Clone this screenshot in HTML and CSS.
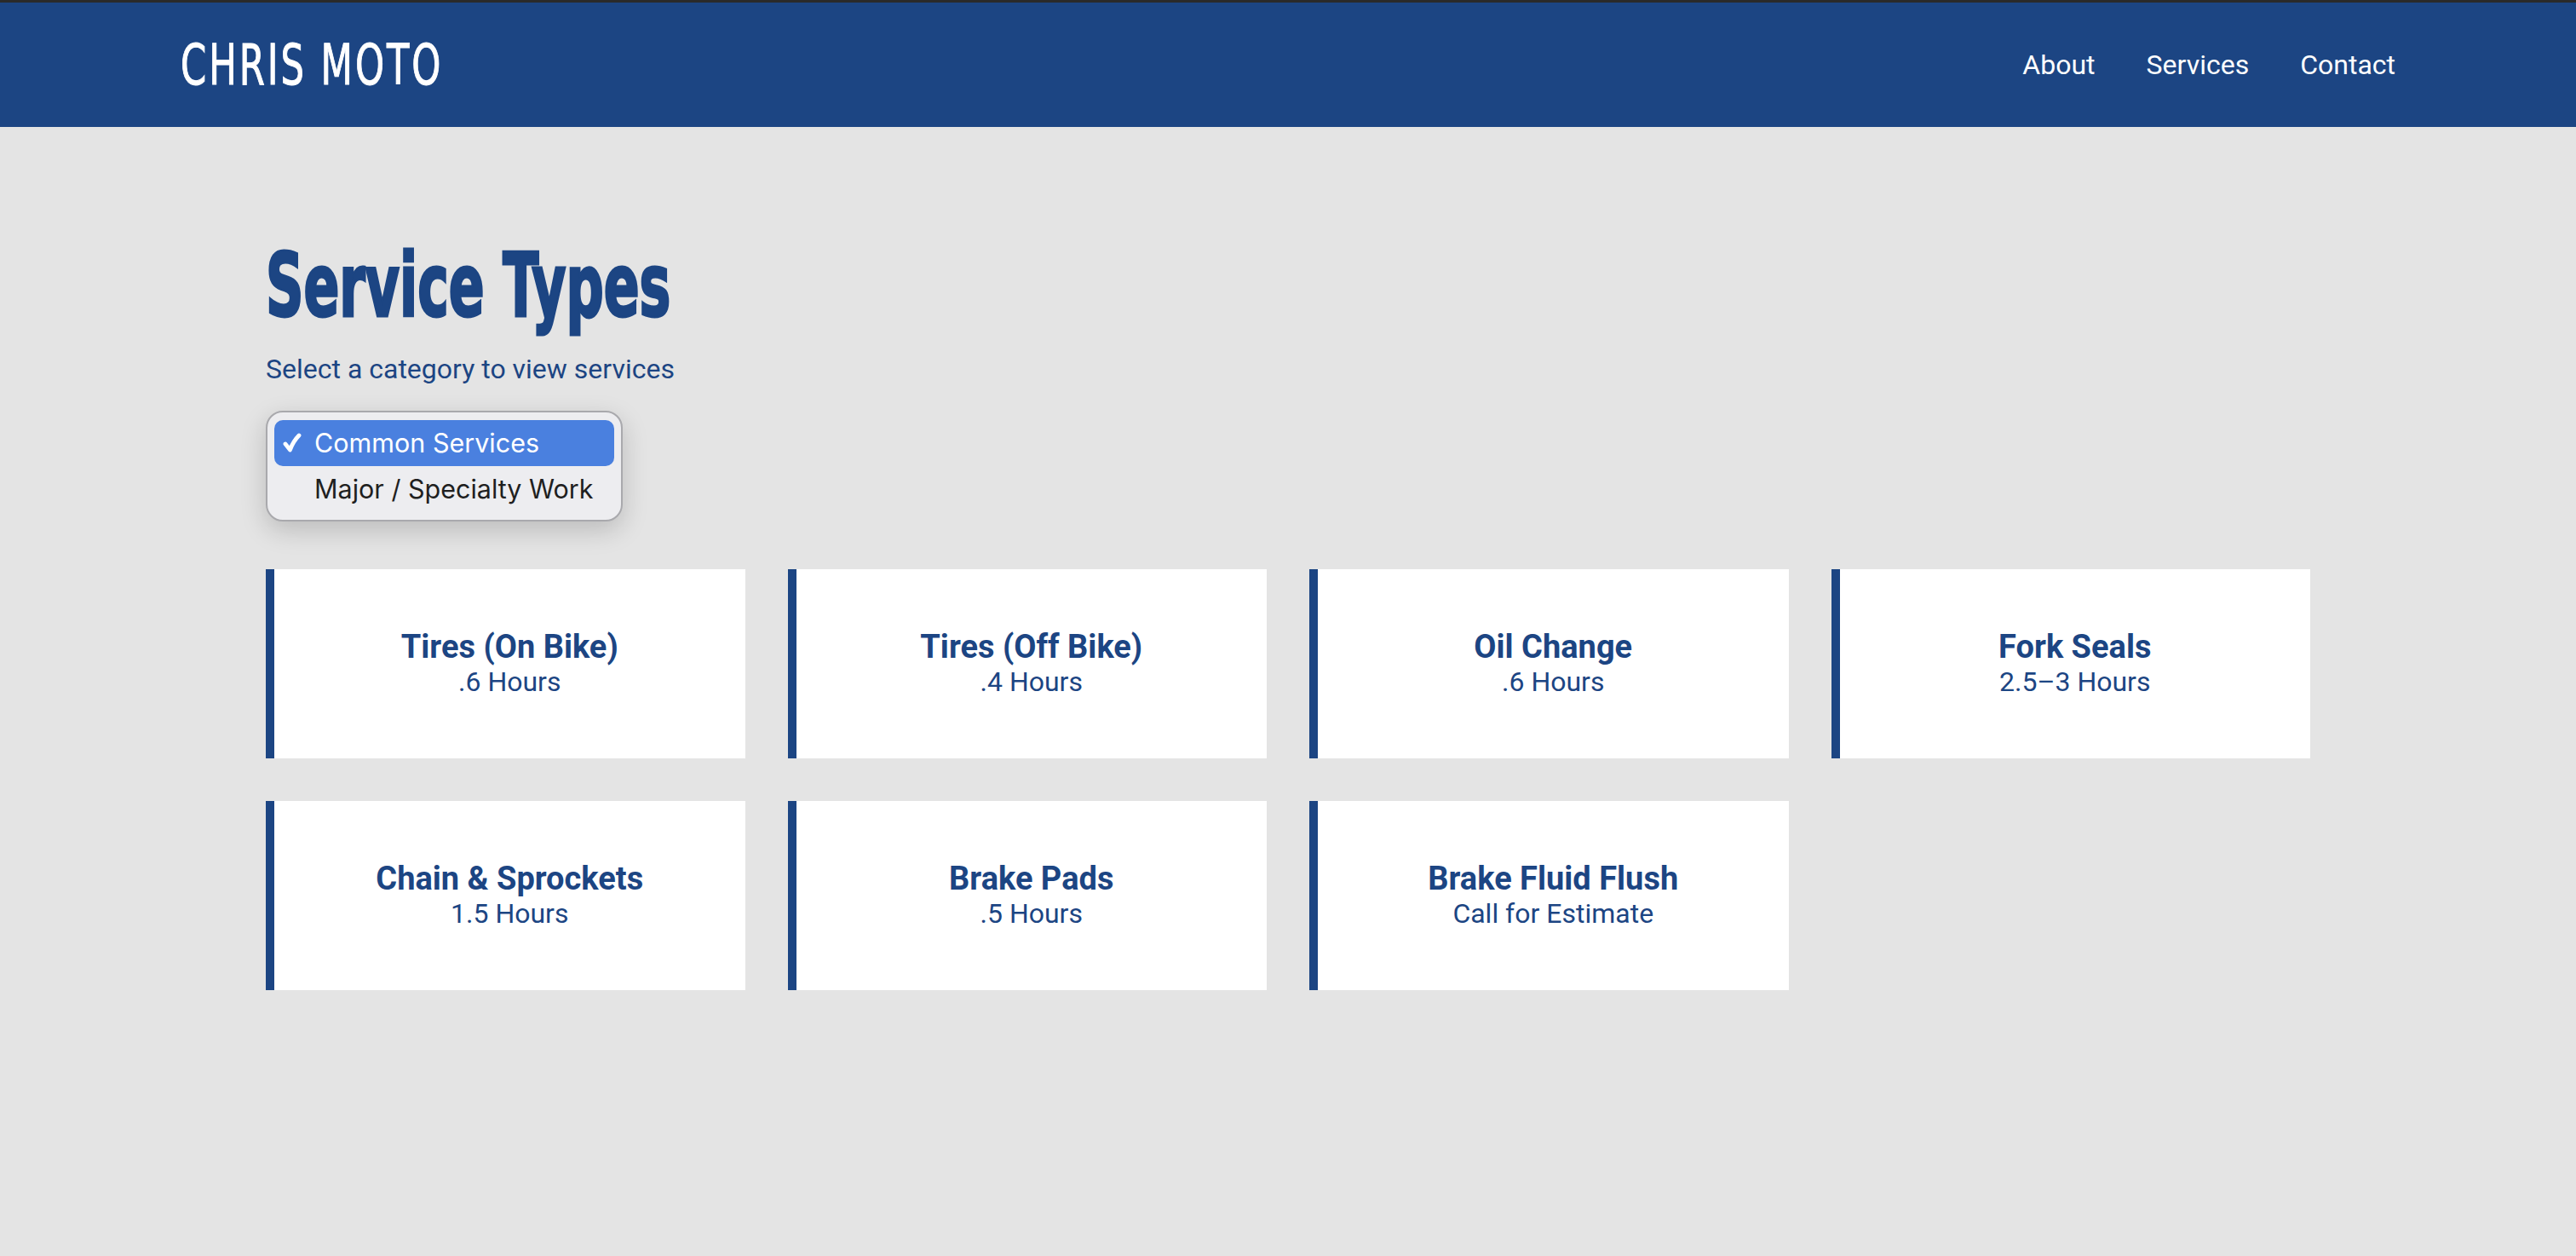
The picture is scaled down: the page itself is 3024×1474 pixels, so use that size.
FILE: index.html
```html
<!DOCTYPE html>
<html>
  <head>
    <title>Chris Moto - Services</title>
    <link rel="stylesheet" href="styles.css">
  </head>
  <body>
    <header class="site-header">
      <div class="header-inner">
        <a class="logo" href="#">CHRIS MOTO</a>
        <nav class="main-nav">
          <a href="#about">About</a>
          <a href="#services">Services</a>
          <a href="#contact">Contact</a>
        </nav>
      </div>
    </header>

    <main class="services" id="services">
      <h1 class="page-title">Service Types</h1>
      <p class="lead">Select a category to view services</p>

      <!-- category picker, shown open -->
      <ul class="category-menu">
        <li class="option selected">
          <svg class="check" width="22" height="24" viewBox="0 0 22 24">
            <path d="M3 13 L8.5 20 Q12 10 19 3" fill="none" stroke="white" stroke-width="4.8" stroke-linecap="round" stroke-linejoin="round"/>
          </svg>
          Common Services
        </li>
        <li class="option">Major / Specialty Work</li>
      </ul>

      <div class="service-grid">
        <div class="service-card">
          <span class="service-name">Tires (On Bike)</span>
          <span class="service-time">.6 Hours</span>
        </div>
        <div class="service-card">
          <span class="service-name">Tires (Off Bike)</span>
          <span class="service-time">.4 Hours</span>
        </div>
        <div class="service-card">
          <span class="service-name">Oil Change</span>
          <span class="service-time">.6 Hours</span>
        </div>
        <div class="service-card">
          <span class="service-name">Fork Seals</span>
          <span class="service-time">2.5–3 Hours</span>
        </div>
        <div class="service-card">
          <span class="service-name">Chain &amp; Sprockets</span>
          <span class="service-time">1.5 Hours</span>
        </div>
        <div class="service-card">
          <span class="service-name">Brake Pads</span>
          <span class="service-time">.5 Hours</span>
        </div>
        <div class="service-card">
          <span class="service-name">Brake Fluid Flush</span>
          <span class="service-time">Call for Estimate</span>
        </div>
      </div>
    </main>
  </body>
</html>
```

FILE: styles.css
```css
body {
  margin: 0;
  min-height: 100vh;
  background: #e4e4e4;
  font-family: Roboto, "Liberation Sans", sans-serif;
  color: #1c4583;
  border-top: 3px solid #2a2a2a;
  box-sizing: border-box;
}
.site-header {
  background: #1c4583;
}
.header-inner {
  max-width: 2600px;
  margin: 0 auto;
  height: 146px;
  display: flex;
  align-items: center;
  justify-content: space-between;
}
/* no condensed face installed, so squeeze the condensed sans */
.logo {
  display: inline-block;
  font-family: "DejaVu Sans Condensed", sans-serif;
  font-size: 66px;
  letter-spacing: 4px;
  color: white;
  text-decoration: none;
  transform: scaleX(0.73);
  transform-origin: left center;
  -webkit-text-stroke: 1px white;
}
.main-nav {
  display: flex;
  gap: 60px;
}
.main-nav a {
  color: white;
  text-decoration: none;
  font-size: 32px;
}
.services {
  max-width: 2400px;
  margin: 0 auto;
  padding-top: 124px;
}
.page-title {
  margin: 0;
  font-family: "DejaVu Sans Condensed", sans-serif;
  font-weight: bold;
  font-size: 104px;
  line-height: 1.2;
  color: #1c4583;
  transform: scaleX(0.66);
  transform-origin: left center;
  -webkit-text-stroke: 3px #1c4583;
}
.lead {
  margin: 16px 0 30px;
  font-size: 32px;
}
.category-menu {
  list-style: none;
  margin: 0 0 56px;
  padding: 9px 8px;
  width: 419px;
  box-sizing: border-box;
  background: #ededf0;
  border: 2px solid #a9a9ad;
  border-radius: 20px;
  box-shadow: 0 10px 30px rgba(0, 0, 0, 0.18);
  font-family: Inter, Roboto, sans-serif;
  font-size: 30.5px;
  color: #1f1f1f;
}
.option {
  height: 54px;
  display: flex;
  align-items: center;
  padding-left: 47px;
  border-radius: 10px;
}
.option.selected {
  position: relative;
  background: #4a80df;
  color: white;
}
.check {
  position: absolute;
  left: 10px;
  top: 15px;
}
.service-grid {
  display: grid;
  grid-template-columns: repeat(4, 1fr);
  gap: 50px;
}
.service-card {
  background: white;
  border-left: 10px solid #1c4583;
  height: 222px;
  box-sizing: border-box;
  display: flex;
  flex-direction: column;
  align-items: center;
  justify-content: center;
  text-align: center;
}
.service-name {
  font-weight: bold;
  font-size: 38px;
  line-height: 1.15;
}
.service-time {
  font-size: 32px;
  line-height: 1.2;
}
```
